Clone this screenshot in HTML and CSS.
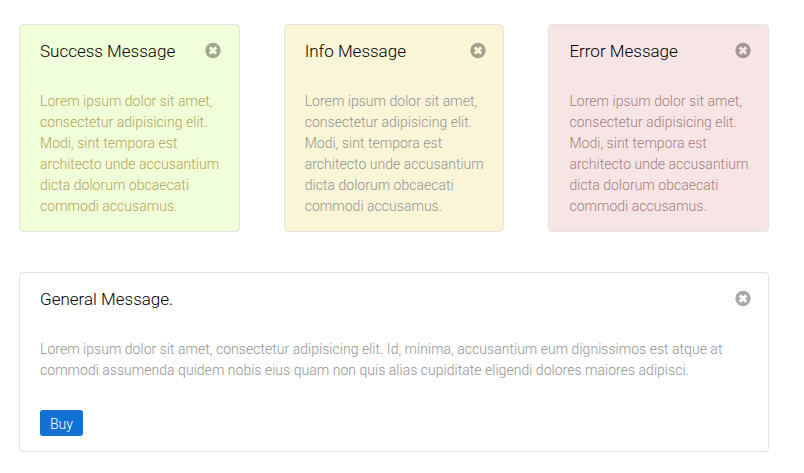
FILE: index.html
```html
<!DOCTYPE html>
<html lang="en">
<head>
<meta charset="utf-8">
<title>Messages</title>
<link rel="stylesheet" href="styles.css">
</head>
<body>
<svg class="defs" width="0" height="0"><symbol id="close" viewBox="0 0 16 16"><path fill-rule="evenodd" d="M8 -.2a7.7 7.7 0 1 0 0 15.4A7.7 7.7 0 0 0 8 -.2ZM5.9 3.3 8 5.4l2.1-2.1 2.1 2.1L10.1 7.5l2.1 2.1-2.1 2.1L8 9.6l-2.1 2.1-2.1-2.1L5.9 7.5 3.8 5.4Z"/></symbol></svg>
<main class="page">
  <div class="row">
    <section class="message success">
      <header><h2>Success Message</h2><svg class="close"><use href="#close"/></svg></header>
      <p>Lorem ipsum dolor sit amet, consectetur adipisicing elit. Modi, sint tempora est architecto unde accusantium dicta dolorum obcaecati commodi accusamus.</p>
    </section>
    <section class="message info">
      <header><h2>Info Message</h2><svg class="close"><use href="#close"/></svg></header>
      <p>Lorem ipsum dolor sit amet, consectetur adipisicing elit. Modi, sint tempora est architecto unde accusantium dicta dolorum obcaecati commodi accusamus.</p>
    </section>
    <section class="message error">
      <header><h2>Error Message</h2><svg class="close"><use href="#close"/></svg></header>
      <p>Lorem ipsum dolor sit amet, consectetur adipisicing elit. Modi, sint tempora est architecto unde accusantium dicta dolorum obcaecati commodi accusamus.</p>
    </section>
  </div>
  <section class="message general">
    <header><h2>General Message.</h2><svg class="close"><use href="#close"/></svg></header>
    <p>Lorem ipsum dolor sit amet, consectetur adipisicing elit. Id, minima, accusantium eum dignissimos est atque at commodi assumenda quidem nobis eius quam non quis alias cupiditate eligendi dolores maiores adipisci.</p>
    <button>Buy</button>
  </section>
</main>
</body>
</html>
```
FILE: styles.css
```css
* { box-sizing: border-box; }
body { margin: 0; background: #fff; font: 300 14px/21px Roboto, sans-serif; color: #939393; }
.defs { display: block; }
.page { width: 750px; margin: 24px 0 0 19px; }
.row { display: grid; grid-template-columns: repeat(3, 220.6px); justify-content: space-between; margin-bottom: 40px; }
.message { border: 1px solid #e3e3e4; border-radius: 4px; padding: 15px 17.5px 0 20px; height: 208px; }
header { display: flex; justify-content: space-between; height: 51px; }
h2 { margin: 0; font-size: 17px; line-height: 22px; font-weight: 300; color: #000; }
.close { width: 16px; height: 16px; margin-top: 3px; fill: #000; opacity: .34; overflow: visible; }
symbol { overflow: visible; }
p { margin: 0 -4px 0 0; letter-spacing: .031px; }
.success { background: #f0ffd9; }
.success p { color: #b3a25c; }
.info { background: #fbf5d8; }
.error { background: #f7e5e5; }
.error p { color: #a77d7d; }
.general { height: 180px; }
.general p { margin-right: 0; }
button { display: block; width: 43px; height: 26px; margin-top: 29px; padding: 2px 0 0; border: 0; border-radius: 3px; background: #1370d4; color: #fff; font: 300 14px/24px Roboto, sans-serif; }
```
